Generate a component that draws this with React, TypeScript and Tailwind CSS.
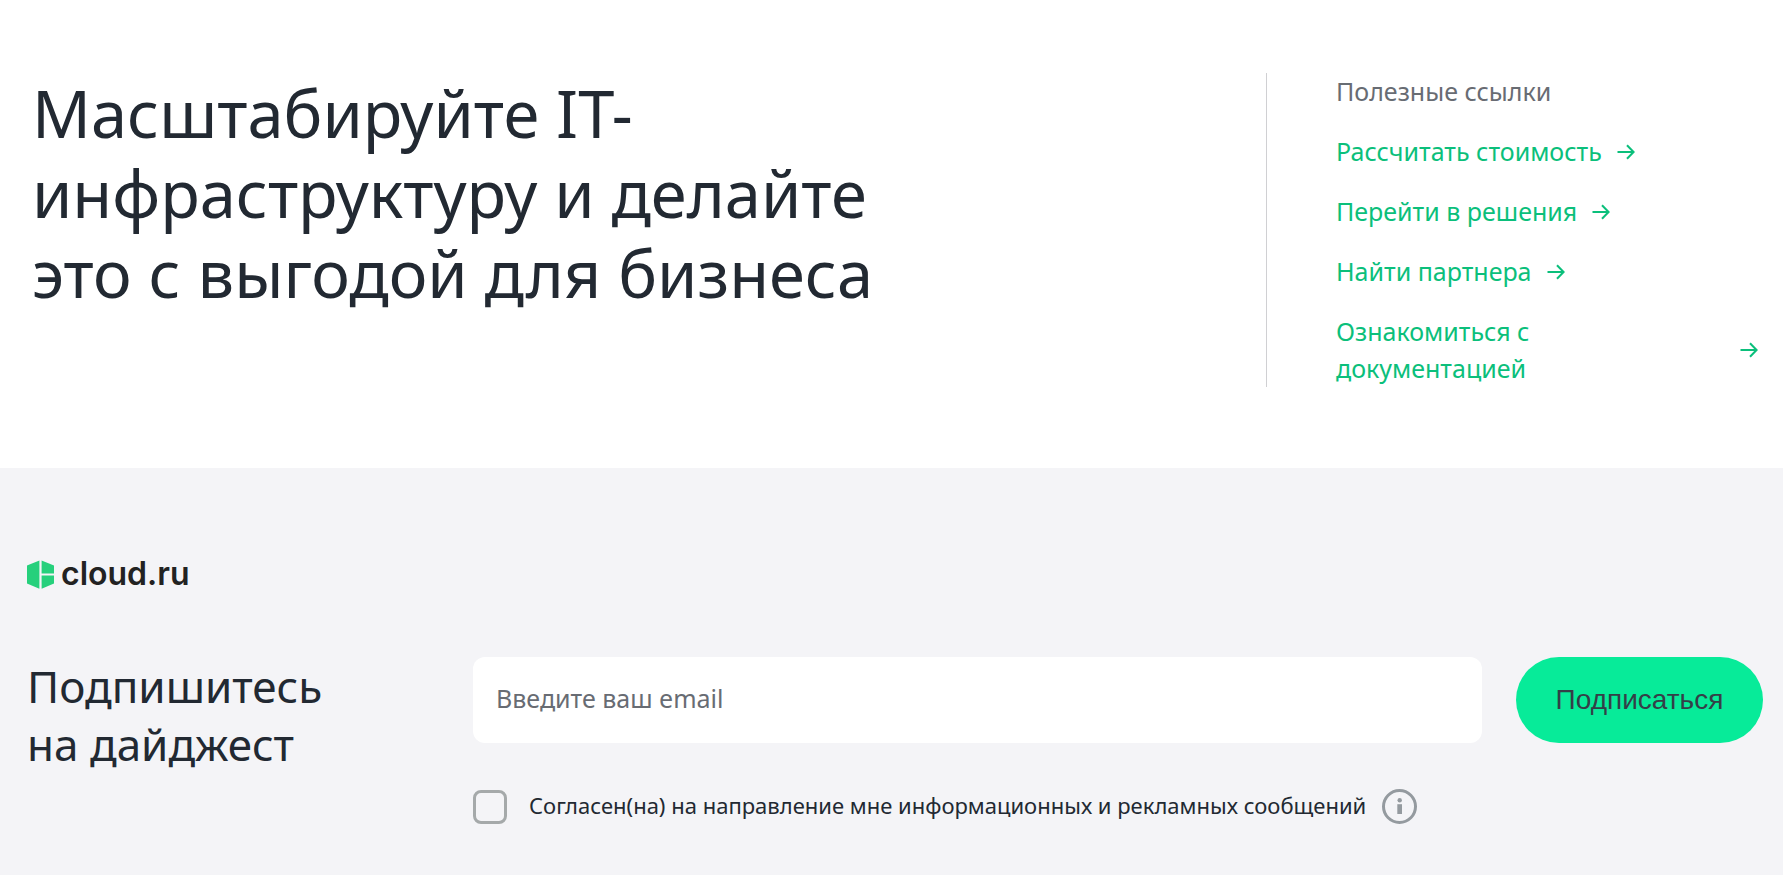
import { useState } from 'react';

const LINKS = [
  { label: 'Рассчитать стоимость', href: '#calculator' },
  { label: 'Перейти в решения', href: '#solutions' },
  { label: 'Найти партнера', href: '#partners' },
  { label: 'Ознакомиться с документацией', href: '#docs' },
];

function Arrow() {
  return (
    <svg className="h-4 w-[18px] shrink-0" viewBox="0 0 18 16" fill="none" stroke="currentColor" strokeWidth="2">
      <path d="M0.5 8H16.5M10 1.2L16.6 8L10 14.8" />
    </svg>
  );
}

function LogoMark() {
  return (
    <svg className="h-[29px] w-[27px]" viewBox="0 0 27 29" fill="#26d07c">
      <path d="M0 5.6L12.4 0.4V28.8L0 23.6Z" />
      <path d="M14.6 0.4L27 5.6V13.4H14.6Z" />
      <path d="M14.6 15.4H27V23.6L14.6 28.8Z" />
    </svg>
  );
}

function InfoIcon() {
  return (
    <svg className="size-[35px]" viewBox="0 0 35 35" fill="#949a9f">
      <circle cx="17.5" cy="17.5" r="16" fill="none" stroke="#949a9f" strokeWidth="3" />
      <circle cx="17.7" cy="11.2" r="2.2" />
      <path d="M15.3 15.2H20V25H15.3Z" />
    </svg>
  );
}

export default function App() {
  const [email, setEmail] = useState('');
  const [agreed, setAgreed] = useState(false);

  return (
    <div className="min-h-screen bg-[#f4f4f7] font-['Noto_Sans',sans-serif] text-[#222932]">
      <section className="flex justify-between bg-white pt-[73px] pr-5 pb-[81px] pl-8">
        <h1 className="max-w-[900px] text-[65px] leading-[80px]">
          Масштабируйте IT-
          <br />
          инфраструктуру и делайте
          <br />
          это с выгодой для бизнеса
        </h1>
        <nav className="flex w-[497px] shrink-0 flex-col items-start gap-[23px] border-l border-[#d0d0d3] pl-[69px] text-[25px] leading-[37px] text-[#0bbf7b]">
          <p className="text-[#686c73]">Полезные ссылки</p>
          {LINKS.map((link) => (
            <a key={link.href} href={link.href} className="flex items-center gap-[15px] pr-[5px] last:gap-10">
              {link.label}
              <Arrow />
            </a>
          ))}
        </nav>
      </section>

      <footer className="pt-[88px] pr-5 pb-12 pl-[27px]">
        <a href="#home" className="flex items-center gap-[7px] font-['Inter',sans-serif] text-[32px] leading-9 font-semibold text-[#222]">
          <LogoMark />
          cloud.ru
        </a>
        <div className="flex pt-[65px]">
          <h2 className="w-[446px] shrink-0 text-[44px] leading-[58px]">
            Подпишитесь
            <br />
            на дайджест
          </h2>
          <form className="flex-1" onSubmit={(e) => e.preventDefault()}>
            <div className="flex gap-[34px]">
              <input
                type="email"
                aria-label="Email"
                value={email}
                onChange={(e) => setEmail(e.target.value)}
                placeholder="Введите ваш email"
                className="h-[86px] min-w-0 flex-1 rounded-xl bg-white px-[23px] pb-1 text-[25px] outline-none placeholder:text-[#686c73]"
              />
              <button
                type="submit"
                className="h-[86px] w-[247px] rounded-full bg-[#07eb99] font-['Liberation_Sans',sans-serif] text-[28px] text-[#343f48]"
              >
                Подписаться
              </button>
            </div>
            <div className="flex items-center pt-[46px]">
              <input
                id="agree"
                type="checkbox"
                checked={agreed}
                onChange={(e) => setAgreed(e.target.checked)}
                className="size-[34px] appearance-none rounded-lg border-3 border-[#a5a9aa] checked:bg-[#07eb99]"
              />
              <label htmlFor="agree" className="pr-4 pb-[3px] pl-[22px] text-[22px] leading-8">
                Согласен(на) на направление мне информационных и рекламных сообщений
              </label>
              <button type="button" aria-label="Подробнее">
                <InfoIcon />
              </button>
            </div>
          </form>
        </div>
      </footer>
    </div>
  );
}
